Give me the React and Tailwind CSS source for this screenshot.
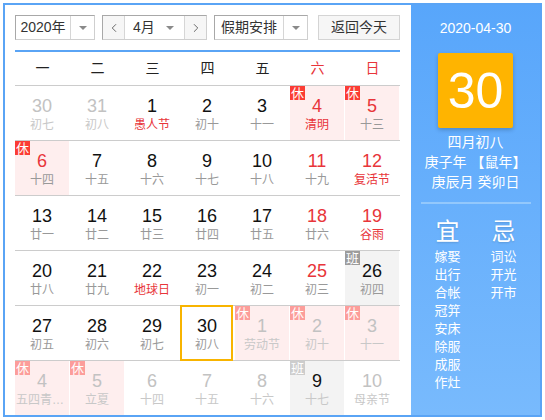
import React from 'react';
import { ChevronLeft, ChevronRight } from 'lucide-react';

const weekdays = ['一', '二', '三', '四', '五', '六', '日'];

// o: other month, r: red number, lr: red lunar, h: 休, w: 班
const rows = [
  [
    { d: 30, l: '初七', o: 1 },
    { d: 31, l: '初八', o: 1 },
    { d: 1, l: '愚人节', lr: 1 },
    { d: 2, l: '初十' },
    { d: 3, l: '十一' },
    { d: 4, l: '清明', r: 1, lr: 1, h: 1 },
    { d: 5, l: '十三', r: 1, h: 1 },
  ],
  [
    { d: 6, l: '十四', r: 1, h: 1 },
    { d: 7, l: '十五' },
    { d: 8, l: '十六' },
    { d: 9, l: '十七' },
    { d: 10, l: '十八' },
    { d: 11, l: '十九', r: 1 },
    { d: 12, l: '复活节', r: 1, lr: 1 },
  ],
  [
    { d: 13, l: '廿一' },
    { d: 14, l: '廿二' },
    { d: 15, l: '廿三' },
    { d: 16, l: '廿四' },
    { d: 17, l: '廿五' },
    { d: 18, l: '廿六', r: 1 },
    { d: 19, l: '谷雨', r: 1, lr: 1 },
  ],
  [
    { d: 20, l: '廿八' },
    { d: 21, l: '廿九' },
    { d: 22, l: '地球日', lr: 1 },
    { d: 23, l: '初一' },
    { d: 24, l: '初二' },
    { d: 25, l: '初三', r: 1 },
    { d: 26, l: '初四', w: 1 },
  ],
  [
    { d: 27, l: '初五' },
    { d: 28, l: '初六' },
    { d: 29, l: '初七' },
    { d: 30, l: '初八', today: 1 },
    { d: 1, l: '劳动节', o: 1, h: 1 },
    { d: 2, l: '初十', o: 1, h: 1 },
    { d: 3, l: '十一', o: 1, h: 1 },
  ],
  [
    { d: 4, l: '五四青年节', o: 1, h: 1 },
    { d: 5, l: '立夏', o: 1, h: 1 },
    { d: 6, l: '十四', o: 1 },
    { d: 7, l: '十五', o: 1 },
    { d: 8, l: '十六', o: 1 },
    { d: 9, l: '十七', o: 1, w: 1 },
    { d: 10, l: '母亲节', o: 1 },
  ],
];

const yi = ['嫁娶', '出行', '合帐', '冠笄', '安床', '除服', '成服', '作灶'];
const ji = ['词讼', '开光', '开市'];

const Caret = () => (
  <span className="w-0 h-0 border-x-[4px] border-x-transparent border-t-[4px] border-t-[#8a8a8a]" />
);

const Cell = ({ c }) => {
  let bg = '';
  if (c.h) bg = 'bg-[#feeeee]';
  if (c.w) bg = 'bg-[#f3f3f3]';

  let num = 'text-[#111]';
  if (c.r) num = 'text-[#e8353a]';
  if (c.o && !c.w) num = 'text-[#c2c2c2]';

  let lunar = 'text-[#999]';
  if (c.lr) lunar = 'text-[#e8353a]';
  if (c.o) lunar = 'text-[#c8c8c8]';

  let badge = null;
  if (c.h) {
    badge = (
      <span className={`absolute left-0 top-0 w-[15px] h-[14px] flex items-center justify-center text-[13px] leading-none text-white ${c.o ? 'bg-[#fc9d9a]' : 'bg-[#fb3c34]'}`}>
        休
      </span>
    );
  }
  if (c.w) {
    badge = (
      <span className={`absolute left-0 top-0 w-[15px] h-[14px] flex items-center justify-center text-[13px] leading-none text-white ${c.o ? 'bg-[#cdcdcd]' : 'bg-[#9c9c9c]'}`}>
        班
      </span>
    );
  }

  return (
    <div className={`relative w-[54px] h-[54px] flex flex-col items-center ${bg}`}>
      {badge}
      <div className={`mt-[10px] text-[18px] leading-[20px] ${num}`}>{c.d}</div>
      <div className={`mt-px w-full px-px text-center text-[12px] leading-[16px] whitespace-nowrap overflow-hidden text-ellipsis ${lunar}`}>
        {c.l}
      </div>
      {c.today ? (
        <div className="absolute left-0 right-px top-[-1px] bottom-[-1px] border-2 border-[#f8b400]" />
      ) : null}
    </div>
  );
};

export default function App() {
  return (
    <div className="w-[545px] h-[420px] bg-white pt-[3px] pl-[3px] font-['Liberation_Sans','Noto_Sans_CJK_SC',sans-serif]">
      <div className="w-[539px] h-[414px] border-2 border-[#5aa4f5] flex overflow-hidden">
        {/* calendar */}
        <div className="w-[406px] pl-[10px] pr-[11px] pt-[10px]">
          <div className="flex items-center h-[25px] text-[14px] text-[#333]">
            <div className="flex h-full w-[80px] border border-[#cfcfcf] border-t-[#a8a8a8] border-l-[#a8a8a8]">
              <div className="flex-1 flex items-center justify-center">2020年</div>
              <div className="w-[24px] border-l border-[#d6d6d6] flex items-center justify-center"><Caret /></div>
            </div>
            <div className="ml-[7px] flex h-full w-[105px] border border-[#cfcfcf] border-t-[#a8a8a8] border-l-[#a8a8a8]">
              <div className="w-[22px] bg-[#f6f6f6] border-r border-[#d6d6d6] flex items-center justify-center text-[#555]">
                <ChevronLeft size={14} strokeWidth={1.5} />
              </div>
              <div className="flex-1 flex items-center pl-[8px] pr-[10px] justify-between">
                <span>4月</span>
                <Caret />
              </div>
              <div className="w-[22px] bg-[#f6f6f6] border-l border-[#d6d6d6] flex items-center justify-center text-[#555]">
                <ChevronRight size={14} strokeWidth={1.5} />
              </div>
            </div>
            <div className="ml-[7px] flex h-full w-[94px] border border-[#cfcfcf] border-t-[#a8a8a8] border-l-[#a8a8a8]">
              <div className="flex-1 flex items-center justify-center">假期安排</div>
              <div className="w-[24px] border-l border-[#d6d6d6] flex items-center justify-center"><Caret /></div>
            </div>
            <div className="ml-auto h-full w-[82px] border border-[#d4d4d4] bg-[#f6f6f6] flex items-center justify-center">
              返回今天
            </div>
          </div>

          <div className="mt-[10px] h-[2px] bg-[#5aa4f5]" />

          <div className="grid grid-cols-7 h-[34px] border-b border-[#cccccc] text-[14px]">
            {weekdays.map((w, i) => (
              <div key={w} className={`flex items-center justify-center ${i > 4 ? 'text-[#e8353a]' : 'text-[#222]'}`}>
                {w}
              </div>
            ))}
          </div>

          {rows.map((row, ri) => (
            <div key={ri} className="grid grid-cols-7 border-b border-[#cccccc]">
              {row.map((c, ci) => (
                <Cell key={ci} c={c} />
              ))}
            </div>
          ))}
        </div>

        {/* side panel */}
        <div className="flex-1 bg-gradient-to-b from-[#58a6fb] to-[#78bafd] flex flex-col items-center text-white">
          <div className="mt-[13px] text-[14px] leading-[20px]">2020-04-30</div>
          <div className="mt-[15px] w-[75px] h-[75px] rounded-[2px] bg-[#ffb400] shadow-[0_2px_4px_rgba(0,0,0,0.2)] flex items-center justify-center text-[50px] leading-none">
            30
          </div>
          <div className="mt-[4px] text-[14px] leading-[20px]">四月初八</div>
          <div className="text-[14px] leading-[20px]">庚子年 【鼠年】</div>
          <div className="text-[14px] leading-[20px]">庚辰月 癸卯日</div>
          <div className="mt-[10px] w-[110px] h-[2px] bg-[#93c8fc]" />
          <div className="mt-[14px] flex gap-[16px]">
            <div className="w-[40px] flex flex-col items-center">
              <div className="text-[24px] leading-[28px] [text-shadow:0_1px_2px_rgba(0,0,0,0.15)]">宜</div>
              <div className="mt-[2px] flex flex-col items-center text-[13px] leading-[18px]">
                {yi.map((t) => (
                  <span key={t}>{t}</span>
                ))}
              </div>
            </div>
            <div className="w-[40px] flex flex-col items-center">
              <div className="text-[24px] leading-[28px] [text-shadow:0_1px_2px_rgba(0,0,0,0.15)]">忌</div>
              <div className="mt-[2px] flex flex-col items-center text-[13px] leading-[18px]">
                {ji.map((t) => (
                  <span key={t}>{t}</span>
                ))}
              </div>
            </div>
          </div>
        </div>
      </div>
    </div>
  );
}
